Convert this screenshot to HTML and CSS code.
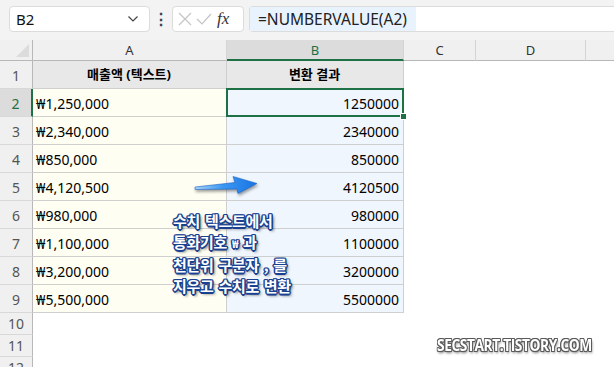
FILE: index.html
```html
<!DOCTYPE html>
<html lang="ko">
<head>
    <meta charset="UTF-8">
    <title>NUMBERVALUE</title>
    <link rel="stylesheet" href="styles.css">
</head>
<body>
    <div class="toolbar">
        <div class="name-box">
            <span>B2</span>
            <svg width="12" height="8" viewBox="0 0 12 8"><path d="M1.5 1.5 L6 6 L10.5 1.5" fill="none" stroke="#444" stroke-width="1.2"/></svg>
        </div>
        <div class="dots">⋮</div>
        <div class="fx-box">
            <svg width="16" height="16" viewBox="0 0 16 16"><path d="M2 2 L14 14 M14 2 L2 14" stroke="#c4c4c4" stroke-width="1.2"/></svg>
            <svg width="18" height="16" viewBox="0 0 18 16"><path d="M2 8 L7 13 L16 3" fill="none" stroke="#c4c4c4" stroke-width="1.2"/></svg>
            <span class="fx">fx</span>
        </div>
        <div class="formula">
            <span class="formula-text">=NUMBERVALUE(A2)</span>
        </div>
    </div>

    <div class="sheet">
        <div class="ch corner"><span class="tri"></span></div>
        <div class="ch">A</div>
        <div class="ch sel">B</div>
        <div class="ch">C</div>
        <div class="ch">D</div>
        <div class="ch last"></div>

        <div class="rh">1</div>
        <div class="ca head">매출액 (텍스트)</div>
        <div class="cb head">변환 결과</div>

        <div class="rh sel">2</div>
        <div class="ca">₩1,250,000</div>
        <div class="cb active">1250000</div>

        <div class="rh">3</div>
        <div class="ca">₩2,340,000</div>
        <div class="cb">2340000</div>

        <div class="rh">4</div>
        <div class="ca">₩850,000</div>
        <div class="cb">850000</div>

        <div class="rh">5</div>
        <div class="ca">₩4,120,500</div>
        <div class="cb">4120500</div>

        <div class="rh">6</div>
        <div class="ca">₩980,000</div>
        <div class="cb">980000</div>

        <div class="rh">7</div>
        <div class="ca">₩1,100,000</div>
        <div class="cb">1100000</div>

        <div class="rh">8</div>
        <div class="ca">₩3,200,000</div>
        <div class="cb">3200000</div>

        <div class="rh">9</div>
        <div class="ca">₩5,500,000</div>
        <div class="cb">5500000</div>

        <div class="rh short">10</div>
        <div class="rh short">11</div>
        <div class="rh short">12</div>

        <!-- 설명 오버레이 -->
        <svg class="arrow" width="64" height="20" viewBox="0 0 64 20">
            <defs>
                <linearGradient id="ag" x1="0" y1="0" x2="1" y2="0">
                    <stop offset="0" stop-color="#a9d3f8"/>
                    <stop offset="0.45" stop-color="#3b98f2"/>
                    <stop offset="1" stop-color="#1873e4"/>
                </linearGradient>
            </defs>
            <path d="M1 12 L41 7.5 L39 1.5 L63 8.5 L44 18.5 L43 14 L1 14.5 Z" fill="url(#ag)" stroke="#1a64c8" stroke-width="0.6"/>
        </svg>
        <div class="note">
            수치 텍스트에서<br>
            통화기호&nbsp;<span class="won">₩</span>&nbsp;과<br>
            천단위 구분자 , 를<br>
            지우고 수치로 변환
        </div>
    </div>

    <div class="watermark">SECSTART.TISTORY.COM</div>
</body>
</html>
```

FILE: styles.css
```css
body {
    margin: 0;
    width: 614px;
    height: 367px;
    overflow: hidden;
    background: #fff;
    font-family: "Noto Sans", "Noto Sans CJK KR", sans-serif;
    color: #111;
    position: relative;
}

/* 상단 수식 입력줄 */
.toolbar {
    height: 40px;
    background: #f3f3f3;
    display: flex;
    align-items: flex-start;
    padding: 6px 0 0 9px;
    box-sizing: border-box;
}

.name-box {
    width: 141px;
    height: 26px;
    box-sizing: border-box;
    background: #fff;
    border: 1px solid #dcdcdc;
    border-radius: 4px;
    display: flex;
    align-items: center;
    justify-content: space-between;
    padding: 0 10px 0 6px;
    font-size: 15px;
}

.dots {
    width: 22px;
    text-align: center;
    font-size: 16px;
    font-weight: bold;
    line-height: 26px;
    color: #444;
}

.fx-box {
    width: 72px;
    height: 26px;
    box-sizing: border-box;
    background: #fff;
    border: 1px solid #dcdcdc;
    border-radius: 4px;
    display: flex;
    align-items: center;
    gap: 2px;
    padding-left: 4px;
}

.fx {
    font-family: "Liberation Serif", serif;
    font-style: italic;
    font-size: 17px;
    color: #333;
    margin-left: 2px;
}

.formula {
    flex: 1;
    margin-left: 5px;
    height: 26px;
    box-sizing: border-box;
    background: #fff;
    border: 1px solid #dcdcdc;
    border-right: none;
    border-radius: 4px 0 0 4px;
    display: flex;
}

.formula-text {
    background: #e9f3fd;
    padding: 0 8px 0 8px;
    width: 150px;
    font-size: 15.5px;
    line-height: 24px;
    color: #222;
}

/* 시트 그리드 */
.sheet {
    display: grid;
    grid-template-columns: 33px 194px 177px 72px 110px 1fr;
    grid-template-rows: 21px repeat(9, 28px) repeat(3, 22px);
    position: relative;
    font-size: 14px;
}

.ch {
    background: #f0f0f0;
    border-right: 1px solid #d4d4d4;
    border-bottom: 1px solid #b8b8b8;
    display: flex;
    align-items: center;
    justify-content: center;
    color: #333;
    font-size: 13px;
    box-sizing: border-box;
}

.ch.last {
    border-right: none;
}

.ch.sel {
    background: #dcdcdc;
    color: #1e7145;
    border-bottom: 2px solid #1e7145;
}

.corner {
    border-right: 1px solid #b8b8b8;
    position: relative;
}

.tri {
    position: absolute;
    right: 3px;
    bottom: 3px;
    width: 0;
    height: 0;
    border-left: 13px solid transparent;
    border-bottom: 13px solid #dcdcdc;
}

.rh {
    grid-column: 1;
    background: #f0f0f0;
    border-right: 1px solid #b8b8b8;
    border-bottom: 1px solid #d8d8d8;
    box-sizing: border-box;
    display: flex;
    align-items: flex-end;
    justify-content: center;
    padding-bottom: 3px;
    color: #555;
    font-size: 14px;
}

.rh.short {
    padding-bottom: 1px;
}

.rh.sel {
    background: #dcdcdc;
    color: #1e7145;
    border-right: 2px solid #1e7145;
}

.ca,
.cb {
    box-sizing: border-box;
    border-right: 1px solid #cfcfcf;
    border-bottom: 1px solid #cfcfcf;
    display: flex;
    align-items: flex-end;
    padding: 0 4px 3px 3px;
    white-space: nowrap;
    color: #000;
}

.ca {
    grid-column: 2;
    background: #fefef3;
}

.cb {
    grid-column: 3;
    background: #eff6fd;
    justify-content: flex-end;
}

.ca.head,
.cb.head {
    background: #e8e8e8;
    justify-content: center;
    font-weight: bold;
    font-size: 13px;
    padding-bottom: 5px;
}

.cb.active {
    position: relative;
}

.cb.active::before {
    content: "";
    position: absolute;
    left: -1px;
    top: -1px;
    right: -1px;
    bottom: -1px;
    border: 2px solid #1e7145;
}

.cb.active::after {
    content: "";
    position: absolute;
    right: -4px;
    bottom: -4px;
    width: 5px;
    height: 5px;
    background: #1e7145;
    border: 1px solid #fff;
}

/* 화살표와 설명 */
.arrow {
    position: absolute;
    left: 194px;
    top: 135px;
    filter: drop-shadow(1px 2px 1.5px rgba(0, 0, 0, 0.4));
}

.note {
    position: absolute;
    left: 173px;
    top: 170px;
    font-family: "Noto Sans CJK KR", sans-serif;
    font-weight: bold;
    font-size: 15px;
    line-height: 21px;
    letter-spacing: -0.3px;
    word-spacing: 1px;
    color: #fff;
    text-shadow:
        1.5px 0 0 #1a4190, -1.5px 0 0 #1a4190, 0 1.5px 0 #1a4190, 0 -1.5px 0 #1a4190,
        1px 1px 0 #1a4190, -1px -1px 0 #1a4190, 1px -1px 0 #1a4190, -1px 1px 0 #1a4190,
        2px 2px 3px rgba(0, 0, 0, 0.7);
}

.won {
    font-size: 11px;
}

.watermark {
    position: absolute;
    left: 437px;
    top: 334px;
    font-family: "Open Sans", sans-serif;
    font-weight: bold;
    font-size: 16px;
    letter-spacing: -0.5px;
    transform: scaleX(0.86);
    transform-origin: left center;
    color: #fff;
    text-shadow:
        1px 0 0 #5a5a5a, -1px 0 0 #5a5a5a, 0 1px 0 #5a5a5a, 0 -1px 0 #5a5a5a,
        1px 1px 0 #5a5a5a, -1px -1px 0 #5a5a5a, 1px -1px 0 #5a5a5a, -1px 1px 0 #5a5a5a,
        1px 2px 3px rgba(0, 0, 0, 0.6);
}
```
